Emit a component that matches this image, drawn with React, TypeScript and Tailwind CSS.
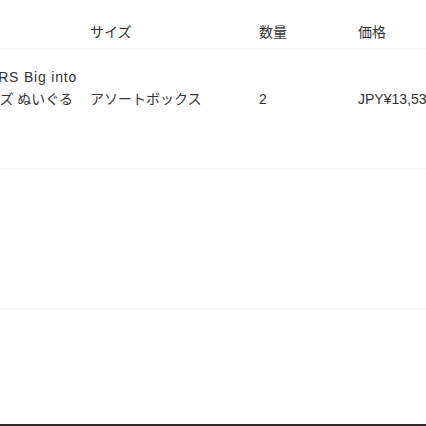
// Order line-item table (cropped view): product / size / qty / price
const FONT = "font-['Liberation_Sans','Noto_Sans_CJK_JP',sans-serif]";

const items = [
  {
    name: ['Jellycat BEARS Big into', 'ビッグサイズ ぬいぐる', 'み'],
    size: 'アソートボックス',
    qty: 2,
    price: 'JPY¥13,530',
  },
];

function Cols({ children }: { children: React.ReactNode }) {
  return <div className="grid grid-cols-[90px_169px_99px_1fr]">{children}</div>;
}

export default function App() {
  return (
    <div className={`w-[426px] h-[426px] overflow-hidden bg-white text-[14px] text-[#333] ${FONT}`}>
      {/* header */}
      <div className="h-[50px] border-b-2 border-[#f7f7f7] pt-[22px] leading-[20px]">
        <Cols>
          <div />
          <div>サイズ</div>
          <div>数量</div>
          <div>価格</div>
        </Cols>
      </div>

      {items.map((it) => (
        <div key={it.price} className="h-[120px] border-b-2 border-[#f7f7f7] leading-[22px]">
          <Cols>
            {/* product name is cut off on the left edge of the viewport */}
            <div className="overflow-hidden pt-[16px]">
              <div className="flex flex-col items-end whitespace-nowrap">
                <span className="mr-[13px] tracking-[0.8px]">{it.name[0]}</span>
                <span className="mr-[17px]">{it.name[1]}</span>
                <span className="mr-[300px]">{it.name[2]}</span>
              </div>
            </div>
            <div className="pt-[38px]">{it.size}</div>
            <div className="pt-[38px]">{it.qty}</div>
            <div className="pt-[38px] whitespace-nowrap">{it.price}</div>
          </Cols>
        </div>
      ))}

      {/* empty rows */}
      <div className="h-[140px] border-b-2 border-[#f7f7f7]" />
      <div className="h-[114px]" />
      <div className="h-[2px] bg-[#2e2e2e]" />
    </div>
  );
}
